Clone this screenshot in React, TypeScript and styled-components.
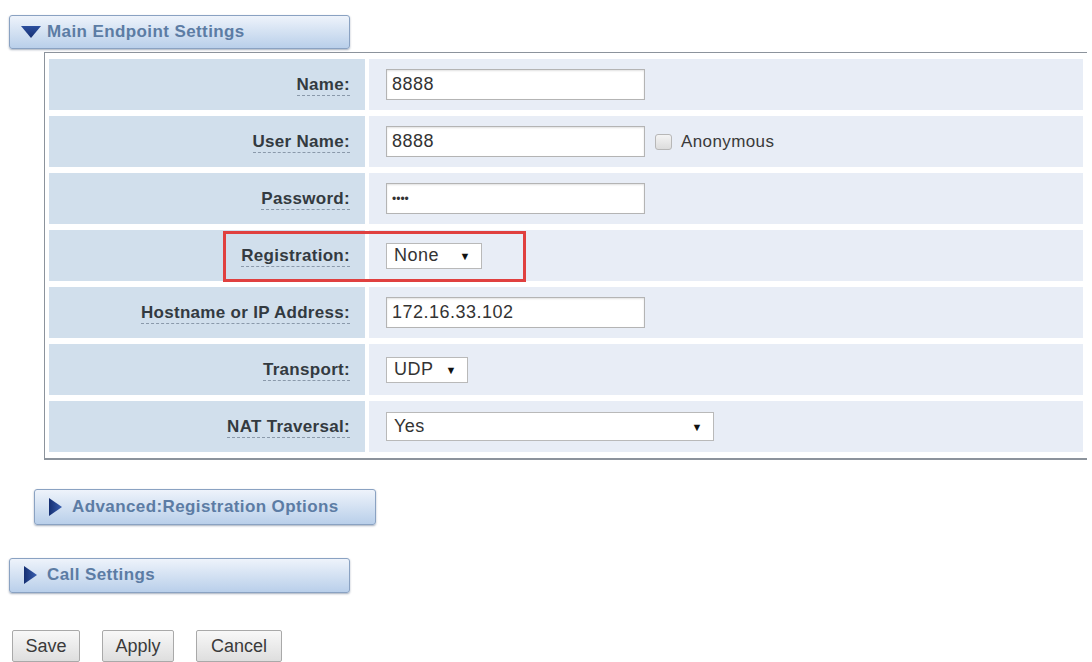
import React from 'react';
import styled, { createGlobalStyle } from 'styled-components';

const GlobalStyle = createGlobalStyle`
  html, body {
    margin: 0;
    padding: 0;
    background: #ffffff;
    font-family: "Liberation Sans", Arial, sans-serif;
  }
`;

const Page = styled.div`
  width: 1092px;
  height: 662px;
  overflow: hidden;
  display: flex;
  flex-direction: column;
  align-items: flex-start;
`;

const SectionBar = styled.div<{ $left: number; $top: number; $width: number; $height: number }>`
  margin-left: ${({ $left }) => $left}px;
  margin-top: ${({ $top }) => $top}px;
  width: ${({ $width }) => $width}px;
  height: ${({ $height }) => $height}px;
  box-sizing: border-box;
  display: flex;
  align-items: center;
  border: 1px solid #8aa2c2;
  border-radius: 3px;
  background: linear-gradient(to bottom, #eef3fb 0%, #d6e3f3 45%, #b9cfea 100%);
  box-shadow: 0 1px 2px rgba(60, 80, 110, 0.45);
`;

const ArrowBox = styled.span`
  width: 33px;
  display: flex;
  justify-content: center;
  padding-left: 4px;
`;

const BarTitle = styled.span`
  font-size: 17px;
  font-weight: bold;
  letter-spacing: 0.4px;
  color: #5c7ca4;
`;

const Panel = styled.div`
  margin: 3px 0 0 44px;
  width: 1043px;
  box-sizing: border-box;
  border-top: 1px solid #8c939c;
  border-left: 1px solid #8c939c;
  border-bottom: 2px solid #8c939c;
`;

const FormTable = styled.table`
  width: 100%;
  border-collapse: separate;
  border-spacing: 4px 6px;
`;

const Row = styled.tr`
  height: 51px;
`;

const LabelCell = styled.td`
  position: relative;
  width: 301px;
  padding: 0 15px 0 0;
  text-align: right;
  vertical-align: middle;
  background: #d1dfec;
`;

const Label = styled.span`
  font-size: 17px;
  font-weight: bold;
  letter-spacing: 0.3px;
  color: #333a40;
  border-bottom: 1px dashed #8a99aa;
  padding-bottom: 1px;
`;

const ValueCell = styled.td`
  padding: 0 0 0 17px;
  vertical-align: middle;
  background: #e8edf6;
`;

const InlineRow = styled.div`
  display: flex;
  align-items: center;
`;

const TextField = styled.input`
  width: 259px;
  height: 31px;
  box-sizing: border-box;
  border: 1px solid #b4b4b4;
  box-shadow: inset 0 1px 2px rgba(0, 0, 0, 0.12);
  background: #ffffff;
  padding: 0 5px;
  font-family: "Liberation Sans", Arial, sans-serif;
  font-size: 18px;
  letter-spacing: 0.5px;
  color: #333;
  outline: none;
`;

const PasswordField = styled(TextField)`
  font-size: 12px;
  letter-spacing: 0;
`;

const CheckBox = styled.span`
  width: 17px;
  height: 16px;
  margin-left: 10px;
  box-sizing: border-box;
  border: 1px solid #b7b7b7;
  border-radius: 3px;
  background: linear-gradient(to bottom, #f4f4f4, #dcdcdc);
`;

const CheckText = styled.span`
  margin-left: 9px;
  font-size: 17px;
  letter-spacing: 0.4px;
  color: #3a3a3a;
`;

const SelectBox = styled.div<{ $width: number; $height: number }>`
  width: ${({ $width }) => $width}px;
  height: ${({ $height }) => $height}px;
  box-sizing: border-box;
  display: flex;
  align-items: center;
  justify-content: space-between;
  padding: 0 10px 0 7px;
  border: 1px solid #b9b9b9;
  background: #ffffff;
  font-size: 18px;
  letter-spacing: 0.5px;
  color: #333;
`;

const Caret = styled.span`
  font-size: 11px;
  color: #111;
`;

const Highlight = styled.div`
  position: absolute;
  left: 174px;
  top: 1px;
  width: 303px;
  height: 51px;
  box-sizing: border-box;
  border: 3px solid #e0403f;
  pointer-events: none;
`;

const ButtonRow = styled.div`
  margin: 37px 0 0 12px;
  display: flex;
  gap: 22px;
`;

const ActionButton = styled.button<{ $width: number }>`
  width: ${({ $width }) => $width}px;
  height: 32px;
  box-sizing: border-box;
  border: 1px solid #a9a9a9;
  border-radius: 2px;
  background: linear-gradient(to bottom, #f8f8f8, #dedede);
  font-family: "Liberation Sans", Arial, sans-serif;
  font-size: 18px;
  color: #3a3a3a;
  padding: 0;
`;

const DownArrow = () => (
  <svg width="20" height="12" viewBox="0 0 20 12">
    <defs>
      <linearGradient id="dg" x1="0" y1="0" x2="0" y2="1">
        <stop offset="0" stopColor="#2c4f9e" />
        <stop offset="1" stopColor="#152f72" />
      </linearGradient>
    </defs>
    <polygon points="0,0 20,0 10,12" fill="url(#dg)" />
  </svg>
);

const RightArrow = () => (
  <svg width="13" height="18" viewBox="0 0 13 18">
    <defs>
      <linearGradient id="rg" x1="0" y1="0" x2="1" y2="0">
        <stop offset="0" stopColor="#152f72" />
        <stop offset="1" stopColor="#3a5fb0" />
      </linearGradient>
    </defs>
    <polygon points="0,0 13,9 0,18" fill="url(#rg)" />
  </svg>
);

interface BarProps {
  title: string;
  open?: boolean;
  left: number;
  top: number;
  width: number;
  height: number;
}

const Bar: React.FC<BarProps> = ({ title, open, left, top, width, height }) => (
  <SectionBar $left={left} $top={top} $width={width} $height={height}>
    <ArrowBox>{open ? <DownArrow /> : <RightArrow />}</ArrowBox>
    <BarTitle>{title}</BarTitle>
  </SectionBar>
);

const App: React.FC = () => {
  return (
    <Page>
      <GlobalStyle />
      <Bar title="Main Endpoint Settings" open left={9} top={15} width={341} height={35} />

      <Panel>
        <FormTable>
          <tbody>
            <Row>
              <LabelCell><Label>Name:</Label></LabelCell>
              <ValueCell><TextField defaultValue="8888" /></ValueCell>
            </Row>
            <Row>
              <LabelCell><Label>User Name:</Label></LabelCell>
              <ValueCell>
                <InlineRow>
                  <TextField defaultValue="8888" />
                  <CheckBox />
                  <CheckText>Anonymous</CheckText>
                </InlineRow>
              </ValueCell>
            </Row>
            <Row>
              <LabelCell><Label>Password:</Label></LabelCell>
              <ValueCell><PasswordField type="password" defaultValue="8888" /></ValueCell>
            </Row>
            <Row>
              <LabelCell>
                <Label>Registration:</Label>
                <Highlight />
              </LabelCell>
              <ValueCell>
                <SelectBox $width={96} $height={26}>None <Caret>▼</Caret></SelectBox>
              </ValueCell>
            </Row>
            <Row>
              <LabelCell><Label>Hostname or IP Address:</Label></LabelCell>
              <ValueCell><TextField defaultValue="172.16.33.102" /></ValueCell>
            </Row>
            <Row>
              <LabelCell><Label>Transport:</Label></LabelCell>
              <ValueCell>
                <SelectBox $width={82} $height={26}>UDP <Caret>▼</Caret></SelectBox>
              </ValueCell>
            </Row>
            <Row>
              <LabelCell><Label>NAT Traversal:</Label></LabelCell>
              <ValueCell>
                <SelectBox $width={328} $height={29}>Yes <Caret>▼</Caret></SelectBox>
              </ValueCell>
            </Row>
          </tbody>
        </FormTable>
      </Panel>

      <Bar title="Advanced:Registration Options" left={34} top={29} width={342} height={36} />
      <Bar title="Call Settings" left={9} top={33} width={341} height={36} />

      <ButtonRow>
        <ActionButton $width={68}>Save</ActionButton>
        <ActionButton $width={72}>Apply</ActionButton>
        <ActionButton $width={86}>Cancel</ActionButton>
      </ButtonRow>
    </Page>
  );
};

export default App;
